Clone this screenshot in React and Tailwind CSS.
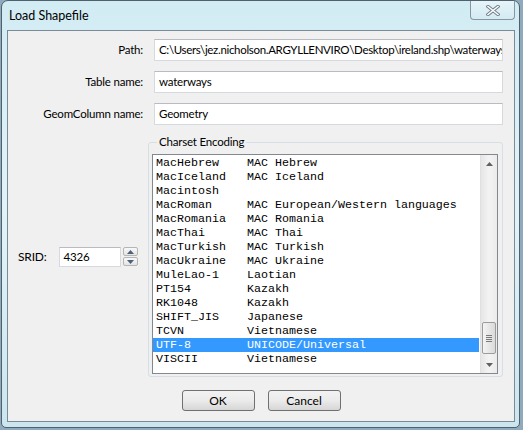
import React from "react";

const rows = [
  ["MacHebrew", "MAC Hebrew"],
  ["MacIceland", "MAC Iceland"],
  ["Macintosh", ""],
  ["MacRoman", "MAC European/Western languages"],
  ["MacRomania", "MAC Romania"],
  ["MacThai", "MAC Thai"],
  ["MacTurkish", "MAC Turkish"],
  ["MacUkraine", "MAC Ukraine"],
  ["MuleLao-1", "Laotian"],
  ["PT154", "Kazakh"],
  ["RK1048", "Kazakh"],
  ["SHIFT_JIS", "Japanese"],
  ["TCVN", "Vietnamese"],
  ["UTF-8", "UNICODE/Universal"],
  ["VISCII", "Vietnamese"],
];

function Field({ label, value, tight }) {
  return (
    <div className="flex items-center h-[22px]">
      <div className="w-[136px] text-right pr-[1px]">{label}</div>
      <div
        className={
          "ml-[10px] flex-1 h-[22px] bg-white border border-[#d6d9dd] border-t-[#b8bcc2] flex items-center pl-[4px] overflow-hidden whitespace-nowrap " +
          (tight ? "tracking-[-0.32px]" : "")
        }
      >
        {value}
      </div>
    </div>
  );
}

export default function App() {
  return (
    <div className="w-[523px] h-[430px] overflow-hidden bg-[#8fa9bd] relative font-['Lato',sans-serif] text-[11.5px] tracking-[-0.2px] text-black">
      <div className="w-[519px] h-[428px] ml-[1px] rounded-t-[7px] rounded-b-[5px] border border-[#50606c] bg-gradient-to-b from-[#d2ecf4] via-[#e2f3f8] to-[#cbe6ef] flex flex-col">
        {/* title bar */}
        <div className="h-[29px] flex items-start justify-between">
          <div className="pl-[7px] pt-[6px] leading-[18px] text-[12.5px] tracking-normal">Load Shapefile</div>
          <div className="mr-[4px] w-[45px] h-[19px] rounded-b-[4px] border border-t-0 border-[#8796a2] bg-gradient-to-b from-[#e6f4f8] to-[#d3ebf2] flex items-center justify-center">
            <svg width="14" height="11" viewBox="0 0 14 11">
              <path d="M2 1.5 L12 9.5 M12 1.5 L2 9.5" stroke="#6f7c86" strokeWidth="3.4" strokeLinecap="square" />
              <path d="M2 1.5 L12 9.5 M12 1.5 L2 9.5" stroke="#ffffff" strokeWidth="1.6" strokeLinecap="square" />
            </svg>
          </div>
        </div>
        {/* client area */}
        <div className="ml-[5px] w-[508px] h-[392px] border border-[#7b8a97] bg-[#f0f0f0] flex flex-col pt-[8px] pr-[11px]">
          <div className="flex flex-col gap-[10px]">
            <Field tight label="Path:" value="C:\Users\jez.nicholson.ARGYLLENVIRO\Desktop\ireland.shp\waterways" />
            <Field label="Table name:" value="waterways" />
            <Field label="GeomColumn name:" value="Geometry" />
          </div>
          <div className="flex mt-[9px]">
            <div className="w-[141px] flex items-center pl-[10px]">
              <div className="mt-[2px] flex items-center">
                <span className="text-[12px]">SRID:</span>
                <div className="ml-[12px] w-[62px] h-[20px] bg-white border border-[#d6d9dd] border-t-[#b8bcc2] flex items-center pl-[4px]">4326</div>
                <div className="ml-[2px] flex flex-col gap-[1px]">
                  <div className="w-[15px] h-[9px] border border-[#b5b5b5] rounded-[2px] bg-gradient-to-b from-[#f8f8f8] to-[#e4e4e4] flex items-center justify-center">
                    <svg width="7" height="4" viewBox="0 0 7 4"><path d="M0 4 L3.5 0 L7 4 Z" fill="#4c607a" /></svg>
                  </div>
                  <div className="w-[15px] h-[9px] border border-[#b5b5b5] rounded-[2px] bg-gradient-to-b from-[#f8f8f8] to-[#e4e4e4] flex items-center justify-center">
                    <svg width="7" height="4" viewBox="0 0 7 4"><path d="M0 0 L3.5 4 L7 0 Z" fill="#4c607a" /></svg>
                  </div>
                </div>
              </div>
            </div>
            <fieldset className="w-[355px] border border-[#d5dfe5] rounded-[3px] pl-[3px] pr-[4px] pb-[2px]">
              <legend className="ml-[5px] px-[2px] leading-[16px]">Charset Encoding</legend>
              <div className="mt-[4px] h-[220px] border border-[#828790] bg-white flex">
                <div className="w-[326px] pt-[1px] font-['Liberation_Mono',monospace] text-[11.67px] tracking-normal leading-[14px]">
                  {rows.map(([a, b]) => {
                    const sel = a === "UTF-8";
                    return (
                      <div
                        key={a}
                        className={
                          "flex h-[14px] pl-[3px] whitespace-pre " +
                          (sel ? "bg-[#3399ff] text-white" : "text-black")
                        }
                      >
                        <span className="w-[91px]">{a}</span>
                        <span>{b}</span>
                      </div>
                    );
                  })}
                </div>
                <div className="w-[17px] ml-[1px] bg-gradient-to-r from-[#e6e6e6] via-[#f3f3f3] to-[#ebebeb] border-l border-[#e0e0e0] flex flex-col items-center">
                  <div className="h-[17px] flex items-center justify-center">
                    <svg width="7" height="4" viewBox="0 0 7 4"><path d="M0 4 L3.5 0 L7 4 Z" fill="#606060" /></svg>
                  </div>
                  <div className="flex-1 w-full flex flex-col justify-end pb-[2px]">
                    <div className="mx-[1px] h-[32px] border border-[#9c9c9c] rounded-[2px] bg-gradient-to-r from-[#f4f4f4] to-[#dadada] flex flex-col items-center justify-center gap-[1px]">
                      <div className="w-[6px] h-[1px] bg-[#7a7a7a]" />
                      <div className="w-[6px] h-[1px] bg-[#7a7a7a]" />
                      <div className="w-[6px] h-[1px] bg-[#7a7a7a]" />
                      <div className="w-[6px] h-[1px] bg-[#7a7a7a]" />
                    </div>
                  </div>
                  <div className="h-[17px] flex items-center justify-center">
                    <svg width="7" height="4" viewBox="0 0 7 4"><path d="M0 0 L3.5 4 L7 0 Z" fill="#606060" /></svg>
                  </div>
                </div>
              </div>
            </fieldset>
          </div>
          <div className="mt-[13px] flex justify-center gap-[13px] pl-[11px]">
            <button className="w-[73px] h-[21px] rounded-[3px] border border-[#707070] bg-gradient-to-b from-[#f2f2f2] via-[#ebebeb] to-[#d6d6d6] leading-[19px] text-[12px] tracking-normal">OK</button>
            <button className="w-[73px] h-[21px] rounded-[3px] border border-[#707070] bg-gradient-to-b from-[#f2f2f2] via-[#ebebeb] to-[#d6d6d6] leading-[19px] text-[12px] tracking-normal">Cancel</button>
          </div>
        </div>
      </div>
    </div>
  );
}
